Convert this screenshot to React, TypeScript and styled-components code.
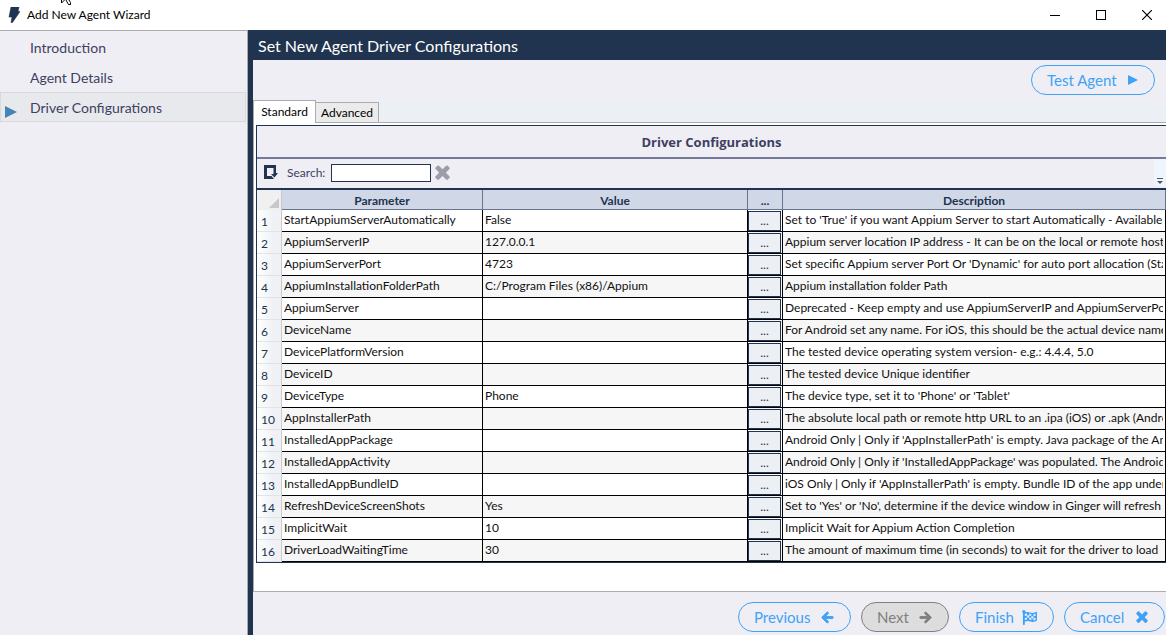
import React from 'react';
import styled, { createGlobalStyle } from 'styled-components';
import { FaArrowLeft, FaArrowRight, FaFlagCheckered } from 'react-icons/fa';

const navy = '#20344f';
const ink = '#3e3f61';
const panel = '#eeeef4';
const blue = '#3fa2f7';

const Global = createGlobalStyle`
  *, *::before, *::after { box-sizing: border-box; }
  body {
    margin: 0;
    background: #fff;
    color: #111;
    font-family: Lato, "Open Sans", sans-serif;
    font-size: 12px;
    line-height: 16px;
  }
  button, input { font-family: inherit; }
`;

const Window = styled.div`
  display: flex;
  flex-direction: column;
  min-height: 100vh;
  overflow: hidden;
`;

const TitleBar = styled.header`
  position: relative;
  display: flex;
  align-items: center;
  height: 30px;
  padding-left: 8px;
  gap: 7px;
`;

const Pointer = styled.svg`
  position: absolute;
  top: 0;
  left: 60px;
`;

const WindowTitle = styled.h1`
  flex: 1;
  margin: 0;
  font-size: 12px;
  font-weight: 400;
  color: #000;
`;

const CaptionButtons = styled.div`
  display: flex;
  margin-right: -4px;
`;

const CaptionButton = styled.button`
  display: flex;
  align-items: center;
  justify-content: center;
  width: 46px;
  height: 28px;
  padding: 0;
  border: 0;
  background: transparent;
`;

const Body = styled.div`
  display: flex;
  flex: 1;
`;

const Sidebar = styled.nav`
  width: 248px;
  flex-shrink: 0;
  padding-top: 1px;
  padding-right: 1px;
  border-top: 1px solid #a9abb1;
  border-right: 1px solid #a9abb1;
  background: ${panel};
`;

const Step = styled.a<{ $current?: boolean }>`
  display: flex;
  align-items: center;
  height: 30px;
  padding-top: 2px;
  border: 1px solid ${p => (p.$current ? '#d9d9dc' : 'transparent')};
  background: ${p => (p.$current ? '#e8e9ed' : 'transparent')};
  color: ${ink};
  font-size: 14px;
  text-decoration: none;
`;

const StepMarker = styled.span`
  display: flex;
  width: 29px;
  padding: 7px 0 0 4px;
`;

const Main = styled.main`
  display: flex;
  flex: 1;
  flex-direction: column;
  min-width: 0;
  border-left: 5px solid ${navy};
  background: ${panel};
`;

const PageTitle = styled.h2`
  height: 30px;
  margin: 0;
  padding: 0 5px;
  background: ${navy};
  color: #fff;
  font-size: 16px;
  font-weight: 400;
  line-height: 32px;
`;

const Actions = styled.div`
  display: flex;
  justify-content: flex-end;
  height: 40px;
  padding: 5px 11px 0 0;
`;

const Pill = styled.button<{ $width: number }>`
  display: flex;
  align-items: center;
  justify-content: space-between;
  width: ${p => p.$width}px;
  height: 30px;
  padding: 0 16px 0 15px;
  border: 1px solid ${blue};
  border-radius: 15px;
  background: transparent;
  color: ${blue};
  font-size: 15px;
  line-height: 20px;

  &:disabled {
    border-color: #808080;
    background: #dddddd;
    color: #808080;
  }
`;

const PreviousIcon = styled(FaArrowLeft)`
  stroke: currentColor;
  stroke-width: 36px;
  overflow: visible;
`;

const NextIcon = styled(FaArrowRight)`
  stroke: currentColor;
  stroke-width: 36px;
  overflow: visible;
`;

const TabStrip = styled.div`
  display: flex;
  align-items: flex-end;
  height: 22px;
  background: #ecf0f4;
`;

const Tab = styled.button<{ $active?: boolean }>`
  position: relative;
  z-index: ${p => (p.$active ? 1 : 0)};
  height: ${p => (p.$active ? 23 : 20)}px;
  width: 63px;
  margin-bottom: ${p => (p.$active ? -1 : 0)}px;
  padding: 0;
  border: 1px solid #acacac;
  border-width: ${p => (p.$active ? '1px 1px 0 1px' : '1px 1px 0 0')};
  background: ${p => (p.$active ? '#fff' : '#ebebeb')};
  color: #000;
  font-size: 12px;
  line-height: 16px;
`;

const TabPane = styled.section`
  flex: 1;
  padding: 2px 0 28px 2px;
  border: 1px solid #acacac;
  border-right: 0;
  background: #fff;
`;

const Grid = styled.div`
  border: 1px solid ${navy};
  border-right: 0;
`;

const GridTitle = styled.h3`
  display: flex;
  align-items: center;
  justify-content: center;
  height: 33px;
  margin: 0;
  border-bottom: 2px solid #77799a;
  background: ${panel};
  color: ${ink};
  font-family: "Open Sans", sans-serif;
  font-size: 13px;
  font-weight: 700;
`;

const GridTools = styled.div`
  display: flex;
  align-items: center;
  height: 31px;
  padding: 0 0 2px 7px;
  border-bottom: 2px solid ${navy};
  background: ${panel};
  color: ${ink};
`;

const IconButton = styled.button`
  display: flex;
  padding: 0;
  border: 0;
  background: transparent;
`;

const SearchLabel = styled.label`
  width: 44px;
  margin-left: 9px;
`;

const SearchInput = styled.input`
  width: 100px;
  height: 18px;
  margin-right: 4px;
  padding: 0 2px;
  border: 1px solid ${navy};
  background: #fff;
  font-size: 12px;
`;

const Overflow = styled.button`
  display: flex;
  align-items: flex-end;
  justify-content: center;
  width: 12px;
  height: 27px;
  margin-left: auto;
  padding: 0 0 2px;
  border: 0;
  background: #eef5fd;
`;

const Table = styled.table`
  width: 100%;
  table-layout: fixed;
  border-collapse: separate;
  border-spacing: 0;
`;

const Column = styled.col<{ $width?: number }>`
  width: ${p => (p.$width ? `${p.$width}px` : 'auto')};
`;

const HeadCell = styled.th`
  height: 20px;
  padding: 2px 0 0;
  border-right: 1px solid #66748e;
  border-bottom: 1px solid #66748e;
  background: #d0d7e6;
  color: ${navy};
  font-size: 12px;
  font-weight: 700;
  line-height: 16px;
`;

const Corner = styled.td`
  padding: 0 2px 2px 0;
  border-right: 1px solid #c8c8cc;
  background: #f0f0f0;
  vertical-align: bottom;

  svg { display: block; margin-left: auto; }
`;

const Row = styled.tr`
  background: #fff;
  &:nth-child(even) { background: #f6f6f6; }
`;

const RowNumber = styled.th`
  padding: 3px 0 0 4px;
  border-right: 1px solid #c8cbd0;
  border-bottom: 1px solid #e2e3e6;
  background: linear-gradient(90deg, #fff, #eff1f5 70%);
  color: ${navy};
  font-size: 12px;
  font-weight: 400;
  line-height: 16px;
  text-align: left;
`;

const Cell = styled.td`
  height: 22px;
  padding: 0 2px 1px;
  border-right: 1px solid #000;
  border-bottom: 1px solid #000;
  color: #111;
  line-height: 16px;
`;

const CellText = styled.div`
  overflow: hidden;
  white-space: nowrap;
`;

const ButtonCell = styled(Cell)`
  padding: 0 1px 0 0;
`;

const EditButton = styled.button`
  display: block;
  width: 100%;
  height: 20px;
  padding: 0;
  border: 1px solid ${navy};
  background: #ecf0f5;
  color: ${navy};
  font-size: 12px;
  line-height: 16px;
`;

const Footer = styled.footer`
  display: flex;
  justify-content: flex-end;
  gap: 10px;
  padding: 10px 1px 3px 0;
`;

const crossPath =
  'M1490 1322q0 40-28 68l-136 136q-28 28-68 28t-68-28l-294-294-294 294q-28 28-68 28t-68-28l-136-136q-28-28-28-68t28-68l294-294-294-294q-28-28-28-68t28-68l136-136q28-28 68-28t68 28l294 294 294-294q28-28 68-28t68 28l136 136q28 28 28 68t-28 68l-294 294 294 294q28 28 28 68z';

const Cross = ({ size, color }: { size: number; color: string }) => (
  <svg width={size} height={size} viewBox="290 330 1210 1230" aria-hidden="true">
    <path d={crossPath} fill={color} />
  </svg>
);

const rows: [string, string, string][] = [
  ['StartAppiumServerAutomatically', 'False', "Set to 'True' if you want Appium Server to start Automatically - Available for local servers"],
  ['AppiumServerIP', '127.0.0.1', 'Appium server location IP address - It can be on the local or remote host machine'],
  ['AppiumServerPort', '4723', "Set specific Appium server Port Or 'Dynamic' for auto port allocation (Start from 4723)"],
  ['AppiumInstallationFolderPath', 'C:/Program Files (x86)/Appium', 'Appium installation folder Path'],
  ['AppiumServer', '', 'Deprecated - Keep empty and use AppiumServerIP and AppiumServerPort'],
  ['DeviceName', '', 'For Android set any name. For iOS, this should be the actual device name'],
  ['DevicePlatformVersion', '', 'The tested device operating system version- e.g.: 4.4.4, 5.0'],
  ['DeviceID', '', 'The tested device Unique identifier'],
  ['DeviceType', 'Phone', "The device type, set it to 'Phone' or 'Tablet'"],
  ['AppInstallerPath', '', 'The absolute local path or remote http URL to an .ipa (iOS) or .apk (Android)'],
  ['InstalledAppPackage', '', "Android Only | Only if 'AppInstallerPath' is empty. Java package of the Android app"],
  ['InstalledAppActivity', '', "Android Only | Only if 'InstalledAppPackage' was populated. The Android activity"],
  ['InstalledAppBundleID', '', "iOS Only | Only if 'AppInstallerPath' is empty. Bundle ID of the app under test"],
  ['RefreshDeviceScreenShots', 'Yes', "Set to 'Yes' or 'No', determine if the device window in Ginger will refresh"],
  ['ImplicitWait', '10', 'Implicit Wait for Appium Action Completion'],
  ['DriverLoadWaitingTime', '30', 'The amount of maximum time (in seconds) to wait for the driver to load'],
];

export default function App() {
  return (
    <Window>
      <Global />
      <TitleBar>
        <svg width="12" height="16" viewBox="0 0 12 16" aria-hidden="true">
          <path d="M3 0H11L10 4.500H12L4.500 15.500H3L4 10H1Z" fill={navy} stroke={navy} strokeWidth=".6" />
        </svg>
        <WindowTitle>Add New Agent Wizard</WindowTitle>
        <CaptionButtons>
          <CaptionButton aria-label="Minimize">
            <svg width="10" height="10"><path d="M0 5.500H10" stroke="#000" /></svg>
          </CaptionButton>
          <CaptionButton aria-label="Maximize">
            <svg width="10" height="10"><rect x=".5" y=".5" width="9" height="9" fill="none" stroke="#000" /></svg>
          </CaptionButton>
          <CaptionButton aria-label="Close">
            <svg width="10" height="10"><path d="M0 0L10 10M10 0L0 10" stroke="#000" strokeWidth="1.200" /></svg>
          </CaptionButton>
        </CaptionButtons>
        <Pointer width="12" height="5" aria-hidden="true">
          <path d="M1.500 0V3L4.500 0M6 0L8.500 4.500H10.500V2.500L9 0" fill="#fff" stroke="#000" />
        </Pointer>
      </TitleBar>
      <Body>
        <Sidebar>
          <Step href="#introduction"><StepMarker />Introduction</Step>
          <Step href="#details"><StepMarker />Agent Details</Step>
          <Step href="#driver" $current aria-current="step">
            <StepMarker>
              <svg width="12" height="12"><path d="M0 0L12 6L0 12Z" fill="#4682b4" /></svg>
            </StepMarker>
            Driver Configurations
          </Step>
        </Sidebar>
        <Main>
          <PageTitle>Set New Agent Driver Configurations</PageTitle>
          <Actions>
            <Pill $width={124}>
              Test Agent
              <svg width="10" height="10"><path d="M0 0L10 5L0 10Z" fill={blue} /></svg>
            </Pill>
          </Actions>
          <TabStrip role="tablist">
            <Tab role="tab" aria-selected="true" $active>Standard</Tab>
            <Tab role="tab" aria-selected="false">Advanced</Tab>
          </TabStrip>
          <TabPane>
            <Grid>
              <GridTitle>Driver Configurations</GridTitle>
              <GridTools>
                <IconButton aria-label="Collapse grid">
                  <svg width="14" height="15" viewBox="0 0 14 15">
                    <path d="M0 0H12V8H14L10.500 12.500L7 9H9.500V3H3V11H7.500L10 14H0Z" fill={navy} />
                  </svg>
                </IconButton>
                <SearchLabel htmlFor="search">Search:</SearchLabel>
                <SearchInput id="search" />
                <IconButton aria-label="Clear search"><Cross size={15} color="#9b9da8" /></IconButton>
                <Overflow aria-label="More tools">
                  <svg width="6" height="6"><path d="M0 .5H6" stroke="#555" /><path d="M0 3H6L3 6Z" fill="#555" /></svg>
                </Overflow>
              </GridTools>
              <Table>
                <colgroup>
                  <Column $width={25} />
                  <Column $width={201} />
                  <Column $width={265} />
                  <Column $width={35} />
                  <Column />
                </colgroup>
                <thead>
                  <tr>
                    <Corner><svg width="10" height="10"><path d="M10 0V10H0Z" fill="#c8c8c8" /></svg></Corner>
                    <HeadCell>Parameter</HeadCell>
                    <HeadCell>Value</HeadCell>
                    <HeadCell>...</HeadCell>
                    <HeadCell>Description</HeadCell>
                  </tr>
                </thead>
                <tbody>
                  {rows.map(([name, value, description], i) => (
                    <Row key={name}>
                      <RowNumber scope="row">{i + 1}</RowNumber>
                      <Cell><CellText>{name}</CellText></Cell>
                      <Cell><CellText>{value}</CellText></Cell>
                      <ButtonCell><EditButton aria-label={`Edit ${name}`}>...</EditButton></ButtonCell>
                      <Cell><CellText>{description}</CellText></Cell>
                    </Row>
                  ))}
                </tbody>
              </Table>
            </Grid>
          </TabPane>
          <Footer>
            <Pill $width={113}>Previous <PreviousIcon size={13} /></Pill>
            <Pill $width={88} disabled>Next <NextIcon size={13} /></Pill>
            <Pill $width={95}>Finish <FaFlagCheckered size={15} /></Pill>
            <Pill $width={101}>Cancel <Cross size={12} color={blue} /></Pill>
          </Footer>
        </Main>
      </Body>
    </Window>
  );
}
